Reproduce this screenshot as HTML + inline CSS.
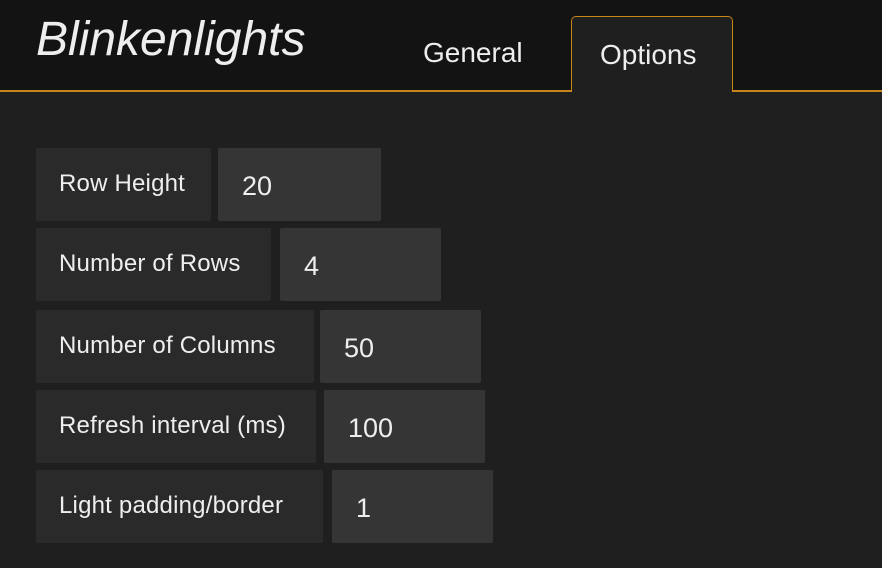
<!DOCTYPE html>
<html><head><style>
body{margin:0;width:882px;height:568px;background:#201f20;font-family:"Liberation Sans",sans-serif;overflow:hidden;position:relative;color:#eee}
.hdr{position:absolute;left:0;top:0;width:882px;height:90px;background:#131313;border-bottom:2px solid #c8861a}
.title{position:absolute;left:36px;top:12px;font-size:48px;font-style:italic;color:#eee;letter-spacing:0px}
.gen{position:absolute;left:423px;top:37px;font-size:28px;color:#eee}
.opt{position:absolute;left:571px;top:16px;width:162px;height:76px;background:#201f20;border:1.5px solid #c8861a;border-bottom:none;border-radius:5px 5px 0 0;box-sizing:border-box}
.opt span{position:absolute;left:28px;top:22px;font-size:28px}
.l,.i{position:absolute;height:73px;border-radius:2px;line-height:73px;box-sizing:border-box;white-space:nowrap}
.l{left:36px;background:#2b2a2b;padding-left:23px;line-height:72px;font-size:24px;letter-spacing:0.2px}
.i{background:#353535;padding-left:24px;font-size:27px;line-height:76px}
</style></head><body>
<div class="hdr"><div class="title">Blinkenlights</div><div class="gen">General</div></div>
<div class="opt"><span>Options</span></div>
<div class="l" style="top:148px;width:175px">Row Height</div><div class="i" style="top:148px;left:218px;width:163px">20</div>
<div class="l" style="top:228px;width:235px">Number of Rows</div><div class="i" style="top:228px;left:280px;width:161px">4</div>
<div class="l" style="top:310px;width:278px">Number of Columns</div><div class="i" style="top:310px;left:320px;width:161px">50</div>
<div class="l" style="top:390px;width:280px">Refresh interval (ms)</div><div class="i" style="top:390px;left:324px;width:161px">100</div>
<div class="l" style="top:470px;width:287px">Light padding/border</div><div class="i" style="top:470px;left:332px;width:161px">1</div>
</body></html>
